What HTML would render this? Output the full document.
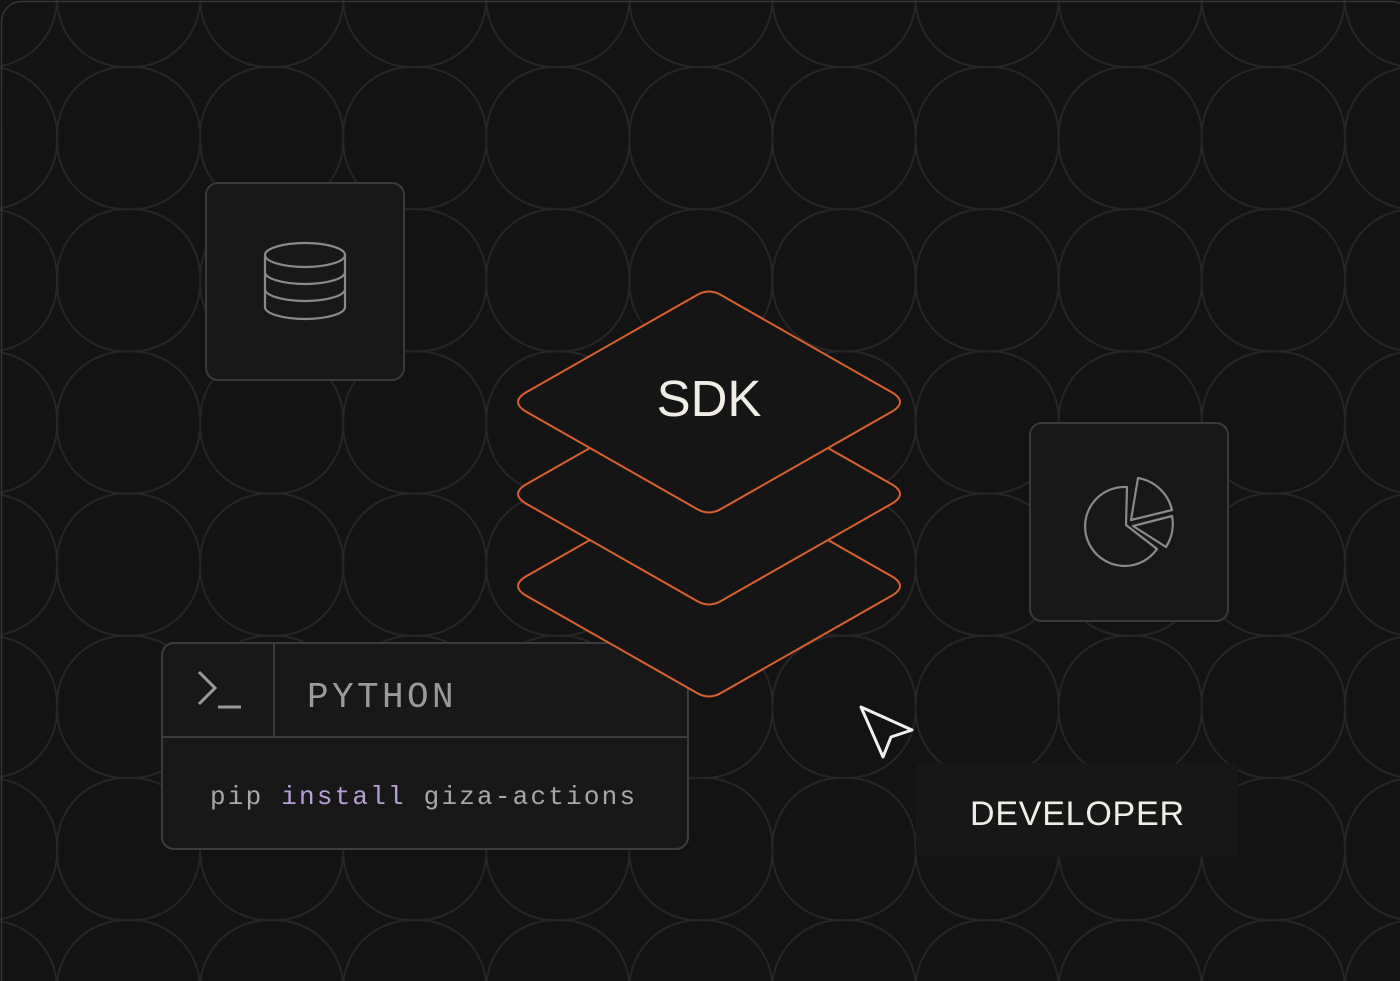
<!DOCTYPE html>
<html><head><meta charset="utf-8"><style>
html,body{margin:0;padding:0;background:#131313;}
body{width:1400px;height:981px;overflow:hidden;}
svg{display:block}
</style></head><body>
<svg width="1400" height="981" viewBox="0 0 1400 981" xmlns="http://www.w3.org/2000/svg">
<defs>
<pattern id="g" x="57" y="67" width="143.1" height="142.2" patternUnits="userSpaceOnUse">
<rect x="0" y="0" width="143.1" height="142.2" rx="68" ry="68" fill="none" stroke="#262626" stroke-width="2"/>
</pattern>
</defs>
<rect width="1400" height="981" fill="#131313"/>
<rect width="1400" height="981" fill="url(#g)"/>
<rect x="1.5" y="1.5" width="1410" height="1000" rx="20" fill="none" stroke="#353535" stroke-width="1.5"/>

<rect x="206" y="183" width="198" height="197" rx="12" fill="#181818" stroke="#3a3a3a" stroke-width="2"/>
<g fill="none" stroke="#8a8a8a" stroke-width="2.2">
<ellipse cx="305" cy="255" rx="40" ry="12"/>
<path d="M265 255 V307 A40 12 0 0 0 345 307 V255"/>
<path d="M265 272 A40 12 0 0 0 345 272"/>
<path d="M265 289 A40 12 0 0 0 345 289"/>
</g>

<rect x="1030" y="423" width="198" height="198" rx="12" fill="#181818" stroke="#3a3a3a" stroke-width="2"/>
<g fill="none" stroke="#8a8a8a" stroke-width="2.2" stroke-linejoin="round">
<path d="M1127 487 A39.5 39.5 0 1 0 1157 549 L1126 525 Z"/>
<path d="M1138 478 A42 42 0 0 1 1172 510 L1131 520 Z"/>
<path d="M1133 526 L1172 516 A42 42 0 0 1 1166 547 Z"/>
</g>

<rect x="162" y="643" width="526" height="206" rx="12" fill="#181818" stroke="#3c3c3c" stroke-width="2"/>
<line x1="162" y1="737" x2="688" y2="737" stroke="#3c3c3c" stroke-width="2"/>
<line x1="274" y1="643" x2="274" y2="737" stroke="#3c3c3c" stroke-width="2"/>
<path d="M199 672 L215 688 L199 704" fill="none" stroke="#9a9a9a" stroke-width="3"/>
<line x1="218" y1="707" x2="241" y2="707" stroke="#9a9a9a" stroke-width="3"/>
<text x="307" y="707" font-family="Liberation Mono, monospace" font-size="36" letter-spacing="3.4" fill="#9a9a9a">PYTHON</text>
<text x="210" y="804" font-family="Liberation Mono, monospace" font-size="26" letter-spacing="2.2" fill="#a8a8a8">pip <tspan fill="#b7a0d8">install</tspan> giza-actions</text>

<g stroke="#d9602f" stroke-width="2" fill="#151515">
<path transform="translate(0,586)" d="M721,-107 L893,-9 Q907,0 893,9 L721,107 Q709,114 697,107 L525,9 Q511,0 525,-9 L697,-107 Q709,-114 721,-107 Z"/>
<path transform="translate(0,494)" d="M721,-107 L893,-9 Q907,0 893,9 L721,107 Q709,114 697,107 L525,9 Q511,0 525,-9 L697,-107 Q709,-114 721,-107 Z"/>
<path transform="translate(0,402)" d="M721,-107 L893,-9 Q907,0 893,9 L721,107 Q709,114 697,107 L525,9 Q511,0 525,-9 L697,-107 Q709,-114 721,-107 Z"/>
</g>
<text x="709" y="416" text-anchor="middle" font-family="Liberation Sans, sans-serif" font-size="51" fill="#f0ede6">SDK</text>

<path d="M861 707 L912 730 L891 737 L883 757 Z" fill="none" stroke="#f0f0f0" stroke-width="3" stroke-linejoin="round"/>

<rect x="916" y="763" width="322" height="94" rx="6" fill="#171717"/>
<text x="970" y="825" font-family="Liberation Sans, sans-serif" font-size="34" textLength="214" lengthAdjust="spacing" fill="#f0ede6">DEVELOPER</text>
</svg>
</body></html>
